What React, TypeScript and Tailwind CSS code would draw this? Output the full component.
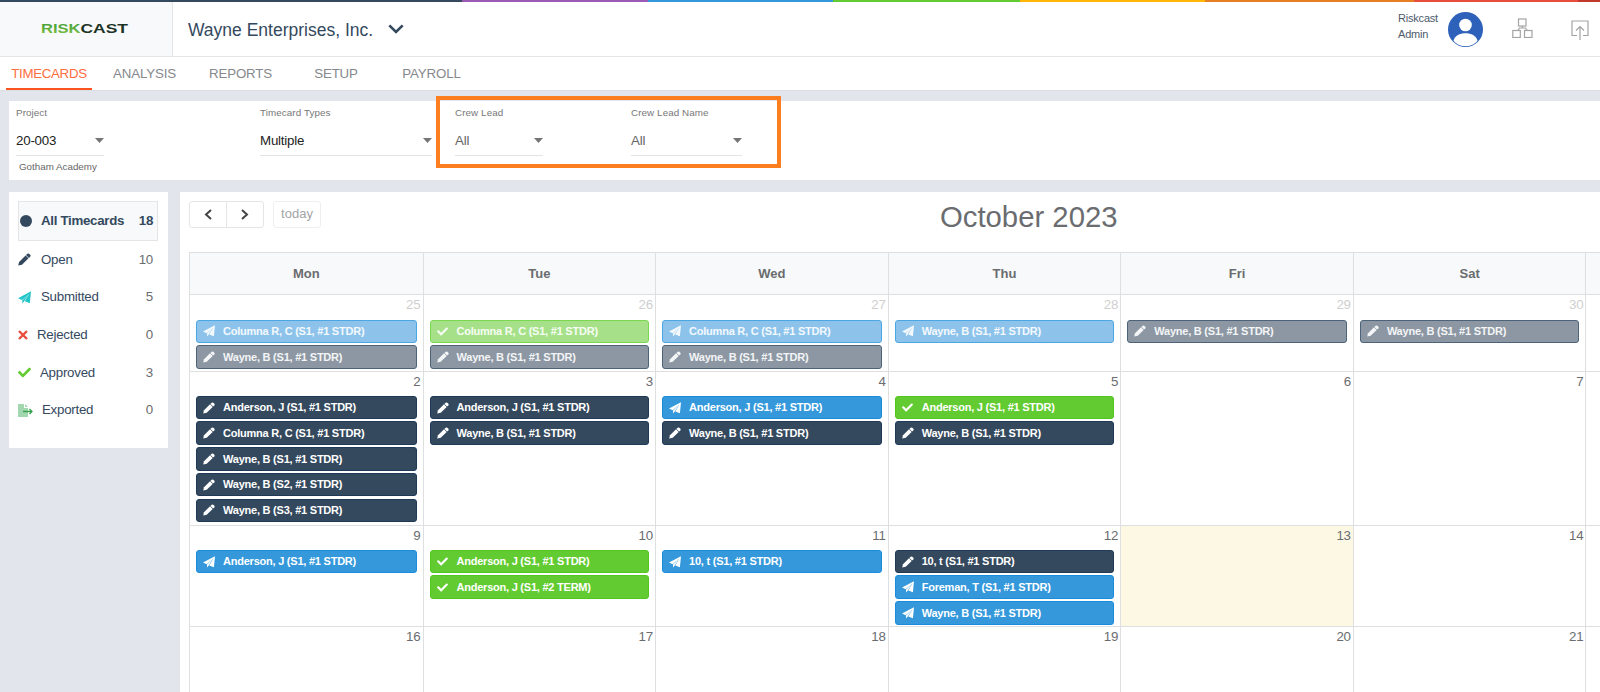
import type { ReactNode } from "react";
import { FaCheck } from "react-icons/fa";

type Status = "open" | "submitted" | "approved";

type CalendarEvent = {
  status: Status;
  title: string;
};

type Day = {
  date: number;
  events?: CalendarEvent[];
  muted?: boolean;
  today?: boolean;
};

const weekDays = ["Mon", "Tue", "Wed", "Thu", "Fri", "Sat"];

const open = (title: string): CalendarEvent => ({ status: "open", title });
const submitted = (title: string): CalendarEvent => ({ status: "submitted", title });
const approved = (title: string): CalendarEvent => ({ status: "approved", title });

const weeks: { height: string; days: Day[] }[] = [
  {
    height: "h-[77px]",
    days: [
      { date: 25, muted: true, events: [submitted("Columna R, C (S1, #1 STDR)"), open("Wayne, B (S1, #1 STDR)")] },
      { date: 26, muted: true, events: [approved("Columna R, C (S1, #1 STDR)"), open("Wayne, B (S1, #1 STDR)")] },
      { date: 27, muted: true, events: [submitted("Columna R, C (S1, #1 STDR)"), open("Wayne, B (S1, #1 STDR)")] },
      { date: 28, muted: true, events: [submitted("Wayne, B (S1, #1 STDR)")] },
      { date: 29, muted: true, events: [open("Wayne, B (S1, #1 STDR)")] },
      { date: 30, muted: true, events: [open("Wayne, B (S1, #1 STDR)")] },
    ],
  },
  {
    height: "h-[154px]",
    days: [
      {
        date: 2,
        events: [
          open("Anderson, J (S1, #1 STDR)"),
          open("Columna R, C (S1, #1 STDR)"),
          open("Wayne, B (S1, #1 STDR)"),
          open("Wayne, B (S2, #1 STDR)"),
          open("Wayne, B (S3, #1 STDR)"),
        ],
      },
      { date: 3, events: [open("Anderson, J (S1, #1 STDR)"), open("Wayne, B (S1, #1 STDR)")] },
      { date: 4, events: [submitted("Anderson, J (S1, #1 STDR)"), open("Wayne, B (S1, #1 STDR)")] },
      { date: 5, events: [approved("Anderson, J (S1, #1 STDR)"), open("Wayne, B (S1, #1 STDR)")] },
      { date: 6 },
      { date: 7 },
    ],
  },
  {
    height: "h-[101px]",
    days: [
      { date: 9, events: [submitted("Anderson, J (S1, #1 STDR)")] },
      { date: 10, events: [approved("Anderson, J (S1, #1 STDR)"), approved("Anderson, J (S1, #2 TERM)")] },
      { date: 11, events: [submitted("10, t (S1, #1 STDR)")] },
      {
        date: 12,
        events: [open("10, t (S1, #1 STDR)"), submitted("Foreman, T (S1, #1 STDR)"), submitted("Wayne, B (S1, #1 STDR)")],
      },
      { date: 13, today: true },
      { date: 14 },
    ],
  },
  {
    height: "h-[101px]",
    days: [{ date: 16 }, { date: 17 }, { date: 18 }, { date: 19 }, { date: 20 }, { date: 21 }],
  },
];

function Pencil({ size }: { size: number }) {
  return (
    <svg width={size} height={size} viewBox="0 0 12 12" fill="currentColor">
      <path d="M.2 11.600 1 8.200 7 2.300l2.700 2.600-6 5.900Z" />
      <path d="M7.400 1.900 8.700.700q.8-.6 1.600 0l1.100 1.100q.6.800 0 1.500L10.100 4.500Z" />
    </svg>
  );
}

function Plane({ size }: { size: number }) {
  return (
    <svg width={size} height={size} viewBox="0 0 12 12" fill="currentColor">
      <path d="M0 6.600 12 .300 10.900 11.300 6.300 9.500 10.400 2.600 3.700 8.200Z" />
      <path d="M4 8.500 10.400 2.600 5.700 9.400 4 11.600Z" />
    </svg>
  );
}

const eventColors: Record<Status, string> = {
  open: "border-[#1f3a56] bg-[#34495e]",
  submitted: "border-[#1b8cdb] bg-[#3498db]",
  approved: "border-[#51c61c] bg-[#62cb31]",
};

const mutedEventColors: Record<Status, string> = {
  open: "border-[#4c6379] bg-[#8c97a3]",
  submitted: "border-[#4ba6e4] bg-[#8dc3eb]",
  approved: "border-[#7ad750] bg-[#a6e18a]",
};

const eventIcons: Record<Status, ReactNode> = {
  open: <Pencil size={12} />,
  submitted: <Plane size={12} />,
  approved: <FaCheck size={11} />,
};

function TopStrip() {
  return (
    <div className="flex h-[2px] shrink-0">
      <div className="w-[462px] bg-[#34495e]" />
      <div className="w-[186px] bg-[#9b59b6]" />
      <div className="w-[185px] bg-[#3498db]" />
      <div className="w-[187px] bg-[#62cb31]" />
      <div className="w-[185px] bg-[#ffb606]" />
      <div className="w-[209px] bg-[#e67e22]" />
      <div className="w-[164px] bg-[#e74c3c]" />
      <div className="flex-1 bg-[#c0392b]" />
    </div>
  );
}

function Header() {
  return (
    <header className="flex h-[55px] shrink-0 border-b border-[#e4e5e7]">
      <div className="flex w-[173px] items-center border-r border-[#e4e5e7] bg-[#f7f9fa] pb-[3px] pl-[41px]">
        <svg width="88" height="14" viewBox="0 0 88 14">
          <defs>
            <linearGradient id="risk" x1="0" x2="0" y1="0" y2="1">
              <stop offset="0" stopColor="#3f9a35" />
              <stop offset="1" stopColor="#7dc242" />
            </linearGradient>
          </defs>
          <text x="0" y="11.5" textLength="39.500" lengthAdjust="spacingAndGlyphs" fontSize="12.5" fontWeight="700" fontFamily="Liberation Sans, sans-serif" fill="url(#risk)">RISK</text>
          <text x="39.5" y="11.5" textLength="47.500" lengthAdjust="spacingAndGlyphs" fontSize="12.5" fontWeight="700" fontFamily="Liberation Sans, sans-serif" fill="#1d3325">CAST</text>
        </svg>
      </div>
      <div className="flex flex-1 items-center pt-[2px] pl-[15px] text-[#34495e]">
        <span className="text-[17.5px]">Wayne Enterprises, Inc.</span>
        <svg width="16" height="10" viewBox="0 0 16 10" className="mb-0.5 ml-[15px] fill-none stroke-[#34495e]" strokeWidth="2.6">
          <path d="M1.3 1.3 8 8l6.700-6.700" />
        </svg>
      </div>
      <div className="flex items-start pr-[11px]">
        <div className="mt-2 w-[50px] text-[11px] leading-4 tracking-[-0.2px] text-[#4d5a6b]">
          Riskcast
          <br />
          Admin
        </div>
        <svg width="35" height="35" viewBox="0 0 35 35" className="mt-[10px]">
          <circle cx="17.500" cy="17.500" r="17.500" fill="#2e62ba" />
          <circle cx="17.500" cy="13" r="6.300" fill="#fff" />
          <path d="M5.500 28.800C6.500 23.700 12 21.300 17.500 21.300s11 2.400 12 7.500C26 33 22 34.200 17.500 34.200S9 33 5.500 28.800Z" fill="#fff" />
        </svg>
        <svg width="21" height="20" viewBox="0 0 21 20" className="mt-4 ml-[29px] fill-none stroke-[#a3a3a3]" strokeWidth="1.200">
          <rect x="6.500" y="1" width="7.500" height="7" />
          <rect x=".8" y="12.500" width="7.500" height="7" />
          <rect x="12.500" y="12.500" width="7.500" height="7" />
          <path d="M10.300 8v2M6 12.500 7.500 10h6l1.500 2.500" />
        </svg>
        <svg width="18" height="21" viewBox="0 0 18 21" className="mt-[18px] ml-[38px] fill-none stroke-[#a3a3a3]" strokeWidth="1.200">
          <path d="M6 15.500H1V1h16v14.500h-5M9 20V6.500M5 10.500l4-4 4 4" />
        </svg>
      </div>
    </header>
  );
}

function Tabs() {
  return (
    <nav className="flex h-[34px] shrink-0 border-b border-[#dcdfe2] pl-[6px] text-[13.3px] tracking-[-0.15px] text-[#85888c]">
      <div className="flex w-[86px] items-center justify-center border-b-2 border-[#fa5421] pt-[2px] tracking-[-0.3px] text-[#ff6d42]">TIMECARDS</div>
      <div className="flex w-[105px] items-center justify-center">ANALYSIS</div>
      <div className="flex w-[87px] items-center justify-center">REPORTS</div>
      <div className="flex w-[104px] items-center justify-center">SETUP</div>
      <div className="flex w-[87px] items-center justify-center">PAYROLL</div>
    </nav>
  );
}

function Filter({ label, value, width, dark }: { label: string; value: string; width: string; dark?: boolean }) {
  return (
    <div className={width}>
      <p className="h-[24px] text-[9.8px] leading-[24px] tracking-[0.1px] text-[#777]">{label}</p>
      <div className={`flex h-[31px] items-center justify-between border-b border-[#e4e4e4] pt-px text-[13.300px] tracking-[-0.2px] ${dark ? "text-[#222]" : "text-[#666]"}`}>
        {value}
        <svg width="9" height="5" viewBox="0 0 9 5" className="fill-[#757575]">
          <path d="M0 0h9L4.500 5z" />
        </svg>
      </div>
    </div>
  );
}

function Filters() {
  return (
    <section className="relative ml-[9px] flex h-[79px] shrink-0 bg-white pl-[7px]">
      <div className="w-[244px]">
        <Filter label="Project" value="20-003" width="w-[88px]" dark />
        <p className="mt-[4px] ml-[3px] text-[9.8px] leading-[14px] text-[#666]">Gotham Academy</p>
      </div>
      <div className="w-[195px]">
        <Filter label="Timecard Types" value="Multiple" width="w-[172px]" dark />
      </div>
      <div className="w-[176px]">
        <Filter label="Crew Lead" value="All" width="w-[88px]" />
      </div>
      <Filter label="Crew Lead Name" value="All" width="w-[111px]" />
      <div className="absolute top-[-5px] left-[427px] h-[72px] w-[345px] border-4 border-[#fd7e1e]" />
    </section>
  );
}

function StatusRow({ icon, label, count, gap }: { icon: ReactNode; label: string; count: number; gap: string }) {
  return (
    <div className="flex h-[37.600px] items-center pr-[5px] text-[13.300px] tracking-[-0.25px]">
      <span className={`flex shrink-0 items-center ${gap}`}>{icon}</span>
      <span className="flex-1 text-[#34495e]">{label}</span>
      <span className="text-[#6a6c6f]">{count}</span>
    </div>
  );
}

function ExportIcon() {
  return (
    <svg width="15" height="13" viewBox="0 0 15 13">
      <path d="M0 0h6v4h4v9H0Z" fill="#a3d7b0" />
      <path d="M7 0v3h3Z" fill="#a3d7b0" />
      <path d="M5 7.500h8.500M11.500 5l2.500 2.500-2.500 2.500" fill="none" stroke="#35a14b" strokeWidth="1.300" />
    </svg>
  );
}

function Sidebar() {
  return (
    <aside className="h-[256px] w-[159px] shrink-0 bg-white pt-[9px] pr-[10px] pl-[9px]">
      <div className="flex h-[40px] items-center border border-[#e4e5e7] bg-[#f7f9fa] pr-[4px] pb-px text-[13.300px] font-bold tracking-[-0.3px] text-[#34495e]">
        <span className="mr-[9px] ml-px h-3 w-3 rounded-full bg-[#34495e]" />
        <span className="flex-1">All Timecards</span>
        <span>18</span>
      </div>
      <StatusRow icon={<span className="text-[#34495e]"><Pencil size={13} /></span>} label="Open" count={10} gap="w-[23px]" />
      <StatusRow icon={<span className="text-[#23c6c8]"><Plane size={13} /></span>} label="Submitted" count={5} gap="w-[23px]" />
      <StatusRow
        icon={
          <svg width="10" height="10" viewBox="0 0 10 10">
            <path d="m1 1 8 8M9 1 1 9" stroke="#e74c3c" strokeWidth="2.400" />
          </svg>
        }
        label="Rejected"
        count={0}
        gap="w-[19px]"
      />
      <StatusRow icon={<FaCheck size={13} className="text-[#62cb31]" />} label="Approved" count={3} gap="w-[22px]" />
      <StatusRow icon={<ExportIcon />} label="Exported" count={0} gap="w-[24px]" />
    </aside>
  );
}

function EventChip({ event, muted }: { event: CalendarEvent; muted?: boolean }) {
  const colors = muted ? mutedEventColors[event.status] : eventColors[event.status];
  return (
    <div className={`flex h-[23.500px] items-center rounded-[3px] border pl-[6px] text-[11px] font-bold tracking-[-0.23px] ${colors} ${muted ? "text-white/90" : "text-white"}`}>
      <span className="w-[20px]">{eventIcons[event.status]}</span>
      {event.title}
    </div>
  );
}

function DayCell({ day }: { day: Day }) {
  return (
    <div className={`border-r border-[#dddfe1] ${day.today ? "bg-[#fcf8e3]" : ""}`}>
      <p className={`pr-[2px] text-right text-[13.300px] leading-5 tracking-[-0.15px] ${day.muted ? "h-[24.500px] text-[#cfcfcf]" : "h-[23.800px] text-[#6a6c6f]"}`}>{day.date}</p>
      <div className="flex flex-col gap-[2.200px] pr-[6px] pl-[6px]">
        {day.events?.map((event) => (
          <EventChip key={event.title} event={event} muted={day.muted} />
        ))}
      </div>
    </div>
  );
}

const columns = "grid grid-cols-[233.500px_repeat(5,232.600px)_1fr]";

function Calendar() {
  return (
    <main className="ml-[12px] flex-1 bg-white pl-[9px]">
      <div className="flex h-[60px] items-start pt-[9px]">
        <div className="flex h-[27px] w-[75px] rounded-[3px] border border-[#e4e5e7] text-[#444]">
          <div className="flex w-[37px] items-center justify-center border-r border-[#e4e5e7]">
            <svg width="8" height="11" viewBox="0 0 8 11" className="fill-none stroke-current" strokeWidth="2">
              <path d="M7 1 2 5.500 7 10" />
            </svg>
          </div>
          <div className="flex flex-1 items-center justify-center">
            <svg width="8" height="11" viewBox="0 0 8 11" className="fill-none stroke-current" strokeWidth="2">
              <path d="m1 1 5 4.500L1 10" />
            </svg>
          </div>
        </div>
        <div className="ml-[9px] flex h-[27px] w-[48px] items-center justify-center rounded-[3px] border border-[#eeeff0] pb-px text-[13px] text-[#a3a4a6]">today</div>
        <h1 className="ml-[619px] text-[29.3px] leading-[32px] text-[#6a6c6f]">October 2023</h1>
      </div>
      <div className="border-l border-[#dddfe1]">
        <div className={`${columns} h-[43px] border-y border-[#dddfe1] bg-[#f7f9fa]`}>
          {weekDays.map((name) => (
            <div key={name} className="flex items-center justify-center border-r border-[#dddfe1] text-[13px] font-bold text-[#6a6c6f]">
              {name}
            </div>
          ))}
        </div>
        {weeks.map((week) => (
          <div key={week.days[0].date} className={`${columns} ${week.height} border-b border-[#dddfe1]`}>
            {week.days.map((day) => (
              <DayCell key={day.date} day={day} />
            ))}
          </div>
        ))}
      </div>
    </main>
  );
}

export default function App() {
  return (
    <div className="flex h-[692px] w-[1600px] flex-col overflow-hidden bg-white font-['Liberation_Sans',Arial,sans-serif]">
      <TopStrip />
      <Header />
      <Tabs />
      <div className="flex min-h-0 flex-1 flex-col bg-[#e2e5ec] pt-[10px]">
        <Filters />
        <div className="mt-[12px] flex min-h-0 flex-1 items-start pl-[9px]">
          <Sidebar />
          <Calendar />
        </div>
      </div>
    </div>
  );
}
